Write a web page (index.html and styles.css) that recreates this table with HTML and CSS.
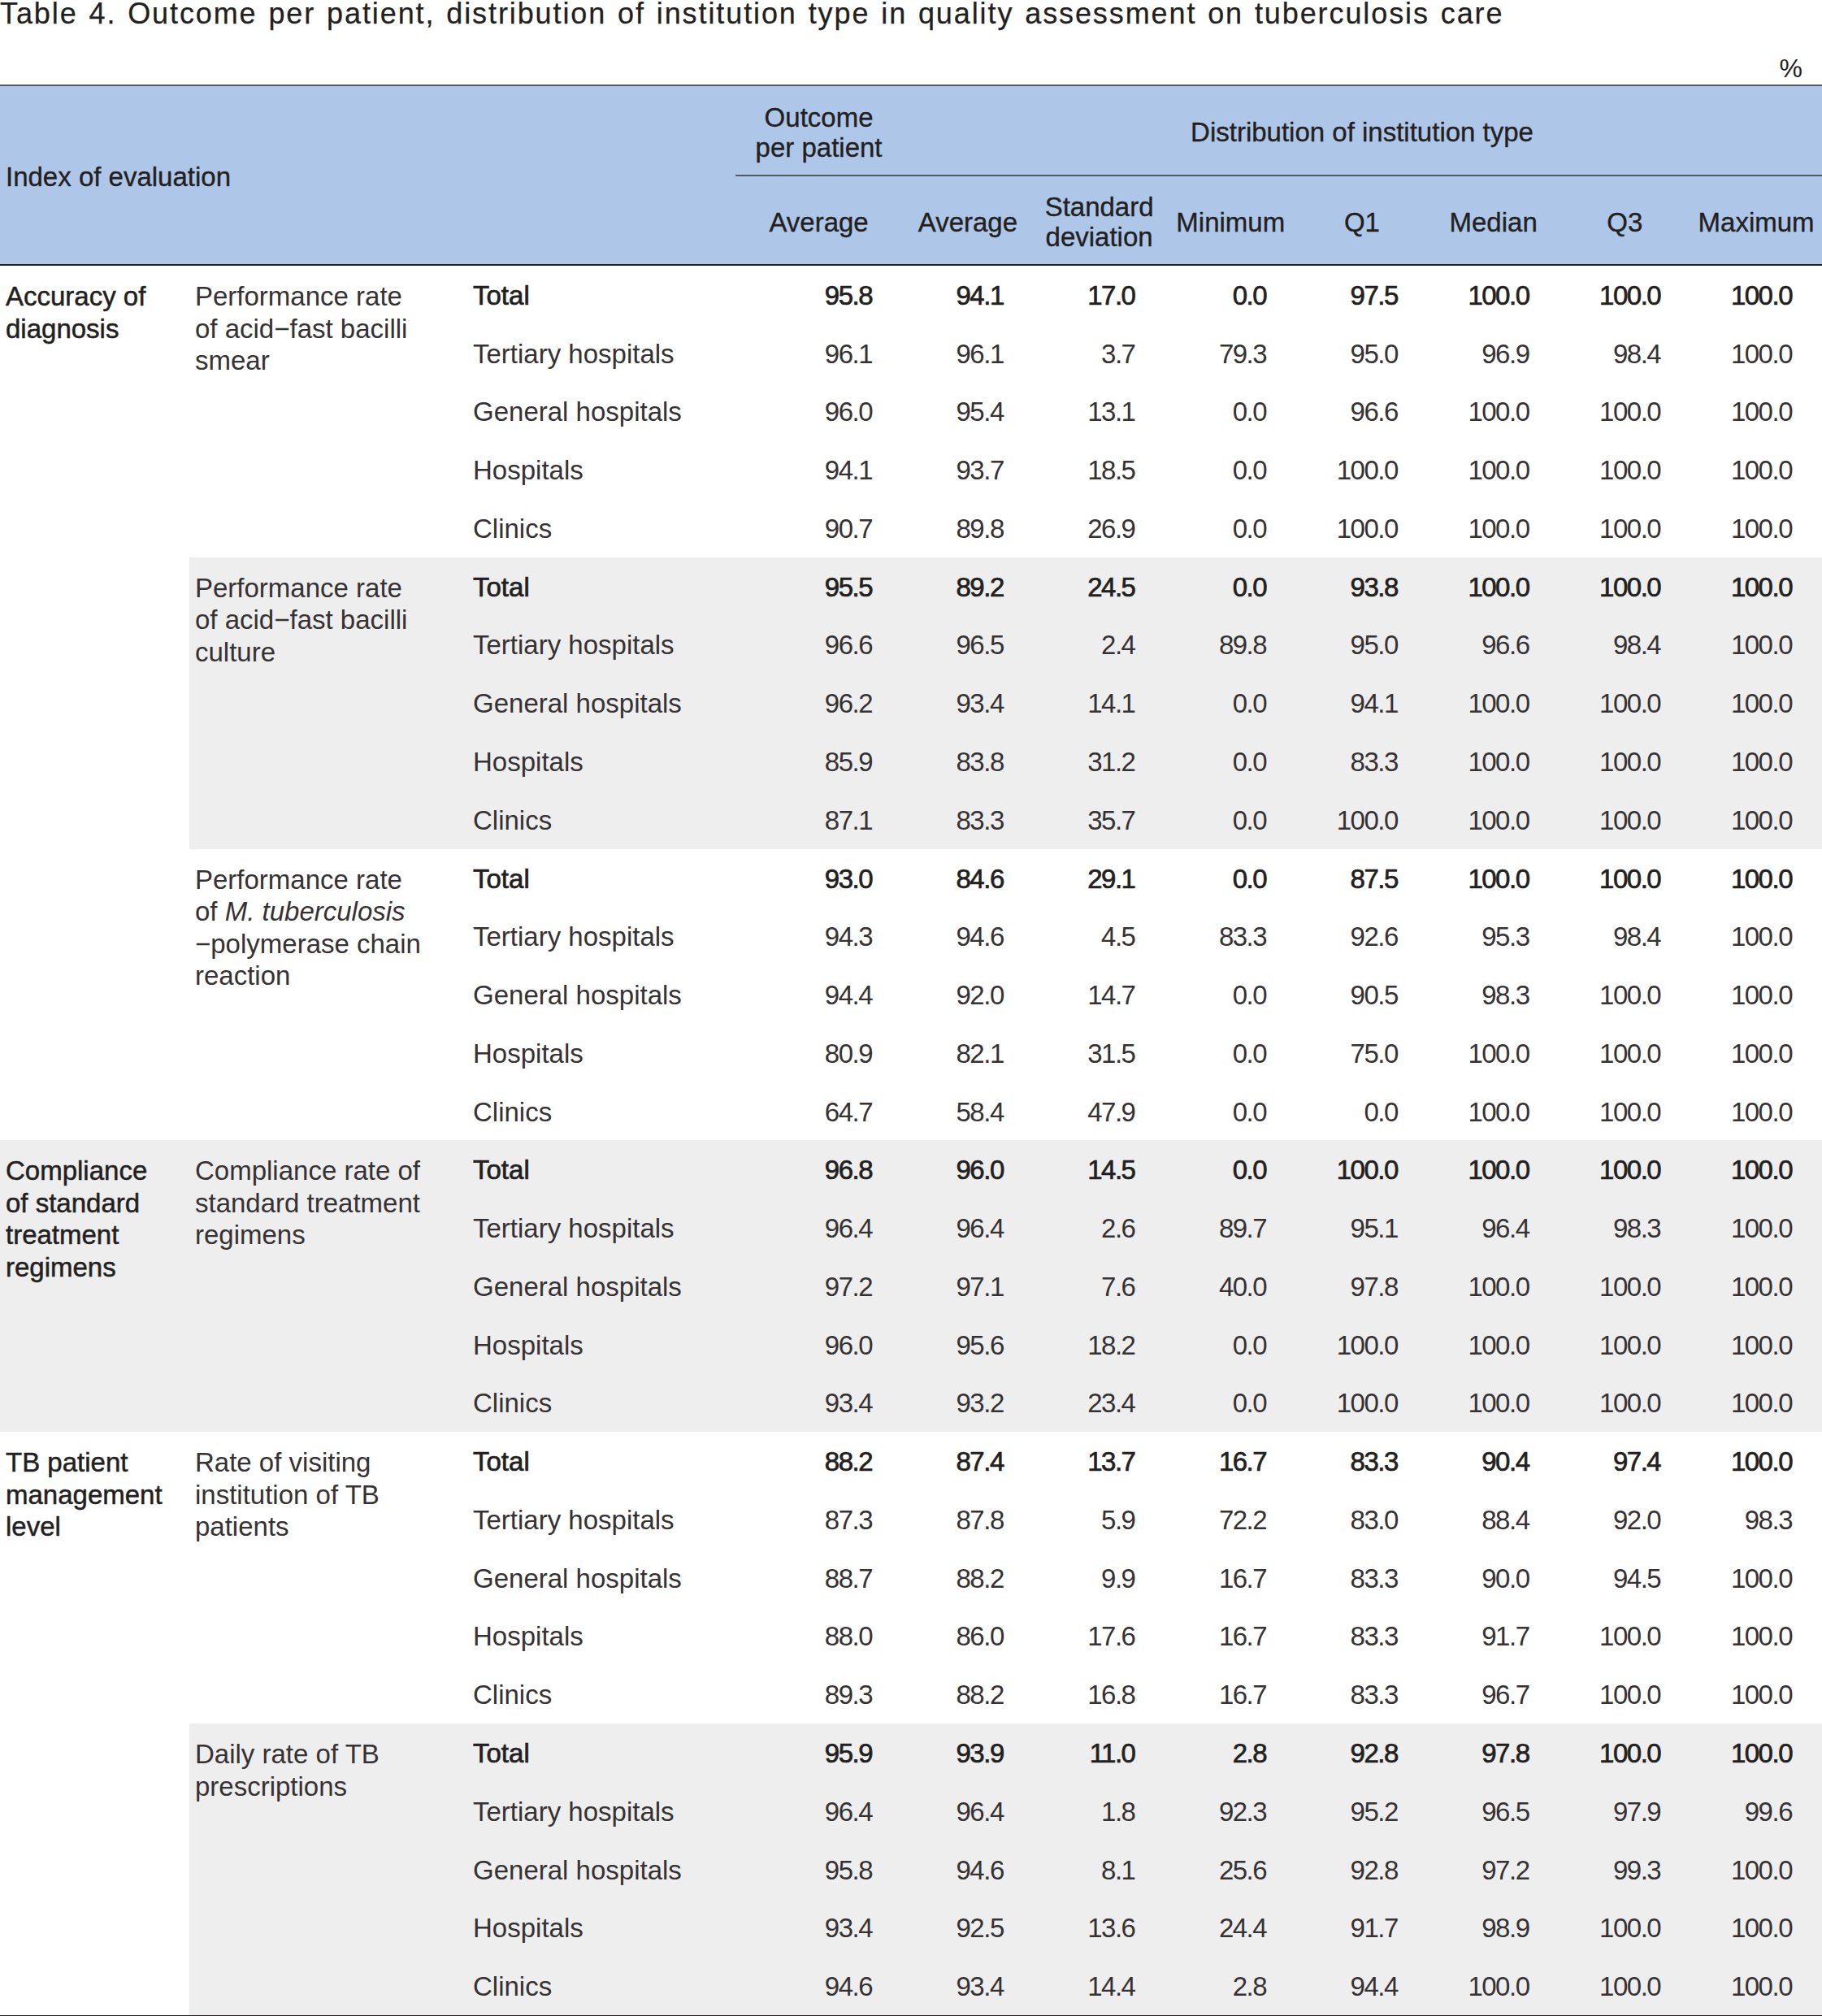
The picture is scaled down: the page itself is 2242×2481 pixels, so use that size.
FILE: index.html
```html
<!DOCTYPE html>
<html lang="en">
<head>
<meta charset="utf-8">
<title>Table 4</title>
<link rel="stylesheet" href="styles.css">
</head>
<body>
<div class="page">
  <div class="caption">Table 4. Outcome per patient, distribution of institution type in quality assessment on tuberculosis care</div>
  <div class="unit">%</div>
  <table class="tbl">
    <colgroup>
      <col class="w-idx"><col class="w-sub"><col class="w-inst"><col class="w-avg">
      <col class="w-d"><col class="w-d"><col class="w-d"><col class="w-d"><col class="w-d"><col class="w-d"><col class="w-d">
    </colgroup>
    <thead>
      <tr class="h1">
        <th class="h-idx" colspan="3" rowspan="2">Index of evaluation</th>
        <th class="h-grp">Outcome<br>per patient</th>
        <th class="h-grp" colspan="7">Distribution of institution type</th>
      </tr>
      <tr class="h2">
        <th>Average</th>
        <th>Average</th>
        <th>Standard<br>deviation</th>
        <th>Minimum</th>
        <th>Q1</th>
        <th>Median</th>
        <th>Q3</th>
        <th>Maximum</th>
      </tr>
    </thead>
    <tbody>
      <!-- Group 1 -->
      <tr class="total">
        <td class="c-idx" rowspan="15">Accuracy of<br>diagnosis</td>
        <td class="c-sub" rowspan="5">Performance rate<br>of acid−fast bacilli<br>smear</td>
        <td class="c-inst">Total</td><td class="num">95.8</td><td class="num">94.1</td><td class="num">17.0</td><td class="num">0.0</td><td class="num">97.5</td><td class="num">100.0</td><td class="num">100.0</td><td class="num">100.0</td>
      </tr>
      <tr><td class="c-inst">Tertiary hospitals</td><td class="num">96.1</td><td class="num">96.1</td><td class="num">3.7</td><td class="num">79.3</td><td class="num">95.0</td><td class="num">96.9</td><td class="num">98.4</td><td class="num">100.0</td></tr>
      <tr><td class="c-inst">General hospitals</td><td class="num">96.0</td><td class="num">95.4</td><td class="num">13.1</td><td class="num">0.0</td><td class="num">96.6</td><td class="num">100.0</td><td class="num">100.0</td><td class="num">100.0</td></tr>
      <tr><td class="c-inst">Hospitals</td><td class="num">94.1</td><td class="num">93.7</td><td class="num">18.5</td><td class="num">0.0</td><td class="num">100.0</td><td class="num">100.0</td><td class="num">100.0</td><td class="num">100.0</td></tr>
      <tr><td class="c-inst">Clinics</td><td class="num">90.7</td><td class="num">89.8</td><td class="num">26.9</td><td class="num">0.0</td><td class="num">100.0</td><td class="num">100.0</td><td class="num">100.0</td><td class="num">100.0</td></tr>

      <!-- Group 2 -->
      <tr class="total shade">
        <td class="c-sub" rowspan="5">Performance rate<br>of acid−fast bacilli<br>culture</td>
        <td class="c-inst">Total</td><td class="num">95.5</td><td class="num">89.2</td><td class="num">24.5</td><td class="num">0.0</td><td class="num">93.8</td><td class="num">100.0</td><td class="num">100.0</td><td class="num">100.0</td>
      </tr>
      <tr class="shade"><td class="c-inst">Tertiary hospitals</td><td class="num">96.6</td><td class="num">96.5</td><td class="num">2.4</td><td class="num">89.8</td><td class="num">95.0</td><td class="num">96.6</td><td class="num">98.4</td><td class="num">100.0</td></tr>
      <tr class="shade"><td class="c-inst">General hospitals</td><td class="num">96.2</td><td class="num">93.4</td><td class="num">14.1</td><td class="num">0.0</td><td class="num">94.1</td><td class="num">100.0</td><td class="num">100.0</td><td class="num">100.0</td></tr>
      <tr class="shade"><td class="c-inst">Hospitals</td><td class="num">85.9</td><td class="num">83.8</td><td class="num">31.2</td><td class="num">0.0</td><td class="num">83.3</td><td class="num">100.0</td><td class="num">100.0</td><td class="num">100.0</td></tr>
      <tr class="shade"><td class="c-inst">Clinics</td><td class="num">87.1</td><td class="num">83.3</td><td class="num">35.7</td><td class="num">0.0</td><td class="num">100.0</td><td class="num">100.0</td><td class="num">100.0</td><td class="num">100.0</td></tr>

      <!-- Group 3 -->
      <tr class="total">
        <td class="c-sub" rowspan="5">Performance rate<br>of <i>M. tuberculosis</i><br>−polymerase chain<br>reaction</td>
        <td class="c-inst">Total</td><td class="num">93.0</td><td class="num">84.6</td><td class="num">29.1</td><td class="num">0.0</td><td class="num">87.5</td><td class="num">100.0</td><td class="num">100.0</td><td class="num">100.0</td>
      </tr>
      <tr><td class="c-inst">Tertiary hospitals</td><td class="num">94.3</td><td class="num">94.6</td><td class="num">4.5</td><td class="num">83.3</td><td class="num">92.6</td><td class="num">95.3</td><td class="num">98.4</td><td class="num">100.0</td></tr>
      <tr><td class="c-inst">General hospitals</td><td class="num">94.4</td><td class="num">92.0</td><td class="num">14.7</td><td class="num">0.0</td><td class="num">90.5</td><td class="num">98.3</td><td class="num">100.0</td><td class="num">100.0</td></tr>
      <tr><td class="c-inst">Hospitals</td><td class="num">80.9</td><td class="num">82.1</td><td class="num">31.5</td><td class="num">0.0</td><td class="num">75.0</td><td class="num">100.0</td><td class="num">100.0</td><td class="num">100.0</td></tr>
      <tr><td class="c-inst">Clinics</td><td class="num">64.7</td><td class="num">58.4</td><td class="num">47.9</td><td class="num">0.0</td><td class="num">0.0</td><td class="num">100.0</td><td class="num">100.0</td><td class="num">100.0</td></tr>

      <!-- Group 4 -->
      <tr class="total shade">
        <td class="c-idx" rowspan="5">Compliance<br>of standard<br>treatment<br>regimens</td>
        <td class="c-sub" rowspan="5">Compliance rate of<br>standard treatment<br>regimens</td>
        <td class="c-inst">Total</td><td class="num">96.8</td><td class="num">96.0</td><td class="num">14.5</td><td class="num">0.0</td><td class="num">100.0</td><td class="num">100.0</td><td class="num">100.0</td><td class="num">100.0</td>
      </tr>
      <tr class="shade"><td class="c-inst">Tertiary hospitals</td><td class="num">96.4</td><td class="num">96.4</td><td class="num">2.6</td><td class="num">89.7</td><td class="num">95.1</td><td class="num">96.4</td><td class="num">98.3</td><td class="num">100.0</td></tr>
      <tr class="shade"><td class="c-inst">General hospitals</td><td class="num">97.2</td><td class="num">97.1</td><td class="num">7.6</td><td class="num">40.0</td><td class="num">97.8</td><td class="num">100.0</td><td class="num">100.0</td><td class="num">100.0</td></tr>
      <tr class="shade"><td class="c-inst">Hospitals</td><td class="num">96.0</td><td class="num">95.6</td><td class="num">18.2</td><td class="num">0.0</td><td class="num">100.0</td><td class="num">100.0</td><td class="num">100.0</td><td class="num">100.0</td></tr>
      <tr class="shade"><td class="c-inst">Clinics</td><td class="num">93.4</td><td class="num">93.2</td><td class="num">23.4</td><td class="num">0.0</td><td class="num">100.0</td><td class="num">100.0</td><td class="num">100.0</td><td class="num">100.0</td></tr>

      <!-- Group 5 -->
      <tr class="total">
        <td class="c-idx" rowspan="10">TB patient<br>management<br>level</td>
        <td class="c-sub" rowspan="5">Rate of visiting<br>institution of TB<br>patients</td>
        <td class="c-inst">Total</td><td class="num">88.2</td><td class="num">87.4</td><td class="num">13.7</td><td class="num">16.7</td><td class="num">83.3</td><td class="num">90.4</td><td class="num">97.4</td><td class="num">100.0</td>
      </tr>
      <tr><td class="c-inst">Tertiary hospitals</td><td class="num">87.3</td><td class="num">87.8</td><td class="num">5.9</td><td class="num">72.2</td><td class="num">83.0</td><td class="num">88.4</td><td class="num">92.0</td><td class="num">98.3</td></tr>
      <tr><td class="c-inst">General hospitals</td><td class="num">88.7</td><td class="num">88.2</td><td class="num">9.9</td><td class="num">16.7</td><td class="num">83.3</td><td class="num">90.0</td><td class="num">94.5</td><td class="num">100.0</td></tr>
      <tr><td class="c-inst">Hospitals</td><td class="num">88.0</td><td class="num">86.0</td><td class="num">17.6</td><td class="num">16.7</td><td class="num">83.3</td><td class="num">91.7</td><td class="num">100.0</td><td class="num">100.0</td></tr>
      <tr><td class="c-inst">Clinics</td><td class="num">89.3</td><td class="num">88.2</td><td class="num">16.8</td><td class="num">16.7</td><td class="num">83.3</td><td class="num">96.7</td><td class="num">100.0</td><td class="num">100.0</td></tr>

      <!-- Group 6 -->
      <tr class="total shade">
        <td class="c-sub" rowspan="5">Daily rate of TB<br>prescriptions</td>
        <td class="c-inst">Total</td><td class="num">95.9</td><td class="num">93.9</td><td class="num">11.0</td><td class="num">2.8</td><td class="num">92.8</td><td class="num">97.8</td><td class="num">100.0</td><td class="num">100.0</td>
      </tr>
      <tr class="shade"><td class="c-inst">Tertiary hospitals</td><td class="num">96.4</td><td class="num">96.4</td><td class="num">1.8</td><td class="num">92.3</td><td class="num">95.2</td><td class="num">96.5</td><td class="num">97.9</td><td class="num">99.6</td></tr>
      <tr class="shade"><td class="c-inst">General hospitals</td><td class="num">95.8</td><td class="num">94.6</td><td class="num">8.1</td><td class="num">25.6</td><td class="num">92.8</td><td class="num">97.2</td><td class="num">99.3</td><td class="num">100.0</td></tr>
      <tr class="shade"><td class="c-inst">Hospitals</td><td class="num">93.4</td><td class="num">92.5</td><td class="num">13.6</td><td class="num">24.4</td><td class="num">91.7</td><td class="num">98.9</td><td class="num">100.0</td><td class="num">100.0</td></tr>
      <tr class="shade"><td class="c-inst">Clinics</td><td class="num">94.6</td><td class="num">93.4</td><td class="num">14.4</td><td class="num">2.8</td><td class="num">94.4</td><td class="num">100.0</td><td class="num">100.0</td><td class="num">100.0</td></tr>
    </tbody>
  </table>
</div>
</body>
</html>
```
FILE: styles.css
```css
html, body {
  margin: 0;
  padding: 0;
  background: #ffffff;
}

.page {
  width: 2242px;
  font-family: "Liberation Sans", Arial, sans-serif;
  color: #231f20;
}

.caption {
  font-size: 36px;
  line-height: 36px;
  margin-top: -1px;
  letter-spacing: 1.9px;
  word-spacing: 2px;
  white-space: nowrap;
  -webkit-text-stroke: 0.25px #231f20;
}

.unit {
  font-size: 32px;
  line-height: 36px;
  height: 69px;
  padding-top: 31px;
  box-sizing: border-box;
  text-align: right;
  padding-right: 24px;
}

.tbl {
  width: 2242px;
  border-collapse: collapse;
  table-layout: fixed;
  font-size: 33px;
  line-height: 39.5px;
  border-bottom: 2px solid #231f20;
}

.w-idx { width: 233px; }
.w-sub { width: 342px; }
.w-inst { width: 330px; }
.w-avg { width: 205px; }
.w-d { width: 161.7px; }

thead th {
  background: #aec6e8;
  font-weight: normal;
  -webkit-text-stroke: 0.35px #231f20;
  text-align: center;
  padding: 4px 0 0 0;
  line-height: 37px;
}

thead tr.h1 th {
  border-top: 2px solid #58595b;
  height: 105px;
}

thead tr.h1 th.h-grp {
  border-bottom: 2px solid #58595b;
}

thead tr.h2 th {
  height: 104px;
  border-bottom: 2px solid #231f20;
}

thead th.h-idx {
  text-align: left;
  padding-left: 7px;
  border-bottom: 2px solid #231f20;
}

tbody td {
  height: 70.28px;
  padding: 1.5px 7px 0 7px;
  vertical-align: middle;
  font-weight: normal;
  color: #363233;
}

tbody td.c-idx,
tbody td.c-sub {
  vertical-align: top;
  padding-top: 18px;
  padding-bottom: 0;
}

tbody td.c-idx {
  -webkit-text-stroke: 0.5px #231f20;
  color: #231f20;
}

tbody td.num {
  text-align: right;
  padding-right: 37px;
  padding-left: 0;
  letter-spacing: -1.5px;
}

tbody tr.total td.c-inst,
tbody tr.total td.num {
  -webkit-text-stroke: 0.7px #231f20;
  color: #231f20;
}

tbody tr.shade td {
  background: #eeeeee;
}
```
